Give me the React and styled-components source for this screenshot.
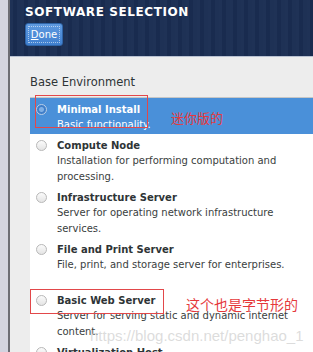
import React from 'react';
import styled, { createGlobalStyle } from 'styled-components';

const GlobalStyle = createGlobalStyle`
  html, body {
    margin: 0;
    padding: 0;
    background: #ededed;
    overflow: hidden;
  }
`;

const Page = styled.div`
  display: flex;
  width: 313px;
  height: 352px;
  font-family: "DejaVu Sans", sans-serif;
  position: relative;
  overflow: hidden;
`;

const SideStrip = styled.div`
  width: 8px;
  flex-shrink: 0;
  background: #d3d3df;
  border-right: 2px solid #6c6c74;
`;

const Main = styled.div`
  flex: 1;
  display: flex;
  flex-direction: column;
  min-width: 0;
`;

const Header = styled.div`
  height: 57px;
  flex-shrink: 0;
  box-sizing: border-box;
  padding: 5px 0 0 15px;
  border-bottom: 1px solid #b9c2d2;
  background:
    repeating-linear-gradient(90deg, rgba(255,255,255,0.025) 0 3px, rgba(0,0,0,0.04) 3px 7px, rgba(255,255,255,0.02) 7px 11px),
    #1a2d52;
`;

const Title = styled.div`
  color: #ffffff;
  font-family: "DejaVu Sans", sans-serif;
  font-weight: bold;
  font-size: 12px;
  letter-spacing: 0.6px;
  line-height: 15px;
`;

const DoneButton = styled.button`
  display: block;
  margin-top: 3px;
  width: 38px;
  height: 23px;
  padding: 2px;
  border: 1px solid #2f65a8;
  border-radius: 3px;
  background: linear-gradient(#5f9ae0, #3f7fcf);
  font-family: "DejaVu Sans", sans-serif;
  font-size: 10px;
  color: #ffffff;
  span {
    display: block;
    height: 100%;
    box-sizing: border-box;
    border: 1px dotted rgba(255,255,255,0.55);
    line-height: 15px;
  }
  u {
    text-decoration: underline;
  }
`;

const Body = styled.div`
  flex: 1;
  padding: 0 0 0 20px;
  background: #ededed;
`;

const SectionLabel = styled.div`
  color: #2e3436;
  font-size: 11.5px;
  line-height: 16px;
  margin: 17px 0 7px;
`;

const List = styled.div`
  background: #ffffff;
  border-top: 1px solid #c6c6c6;
  display: flex;
  flex-direction: column;
`;

const Row = styled.div`
  display: flex;
  gap: 10px;
  padding: 5px 0 1px 6px;
  margin-top: ${p => p.$gap || 0}px;
  background: ${p => p.$selected ? '#4a90d9' : '#ffffff'};
  color: ${p => p.$selected ? '#ffffff' : '#2e3436'};
`;

const Radio = styled.div`
  width: 11px;
  height: 11px;
  margin-top: 1px;
  flex-shrink: 0;
  border-radius: 50%;
  box-sizing: border-box;
  border: 1px solid ${p => p.$checked ? '#b9cde6' : '#b8b8b8'};
  background: ${p => p.$checked
    ? 'radial-gradient(circle, #7fb0e6 0 2px, #3f7ec9 3px)'
    : 'linear-gradient(#fbfbfb, #e4e4e4)'};
`;

const Texts = styled.div`
  display: flex;
  flex-direction: column;
`;

const Name = styled.div`
  font-weight: bold;
  font-size: 10px;
  line-height: 14px;
`;

const Desc = styled.div`
  font-size: 10px;
  line-height: 16px;
  color: ${p => p.$selected ? '#ffffff' : '#3a3e40'};
`;

const NoteBox = styled.div`
  position: absolute;
  left: ${p => p.$left}px;
  top: ${p => p.$top}px;
  width: ${p => p.$w}px;
  height: ${p => p.$h}px;
  border: 1px solid #e2484a;
  box-sizing: border-box;
  pointer-events: none;
`;

const NoteText = styled.div`
  position: absolute;
  left: ${p => p.$left}px;
  top: ${p => p.$top}px;
  color: #e5393b;
  font-family: "Noto Sans CJK SC", sans-serif;
  font-size: ${p => p.$size}px;
  white-space: nowrap;
`;

const Watermark = styled.div`
  position: absolute;
  left: 90px;
  top: 327px;
  color: rgba(205, 205, 205, 0.7);
  font-family: "Liberation Sans", sans-serif;
  font-size: 15px;
  white-space: nowrap;
  pointer-events: none;
`;

const environments = [
  { name: 'Minimal Install', desc: ['Basic functionality.'], selected: true },
  { name: 'Compute Node', desc: ['Installation for performing computation and', 'processing.'] },
  { name: 'Infrastructure Server', desc: ['Server for operating network infrastructure', 'services.'] },
  { name: 'File and Print Server', desc: ['File, print, and storage server for enterprises.'] },
  { name: 'Basic Web Server', desc: ['Server for serving static and dynamic internet', 'content.'], gap: 15 },
  { name: 'Virtualization Host', desc: ['Minimal virtualization host.'] },
];

export default function App() {
  return (
    <>
      <GlobalStyle />
      <Page>
        <SideStrip />
        <Main>
          <Header>
            <Title>SOFTWARE SELECTION</Title>
            <DoneButton><span><u>D</u>one</span></DoneButton>
          </Header>
          <Body>
            <SectionLabel>Base Environment</SectionLabel>
            <List>
              {environments.map((env) => (
                <Row key={env.name} $selected={env.selected} $gap={env.gap}>
                  <Radio $checked={env.selected} />
                  <Texts>
                    <Name>{env.name}</Name>
                    {env.desc.map((line) => (
                      <Desc key={line} $selected={env.selected}>{line}</Desc>
                    ))}
                  </Texts>
                </Row>
              ))}
            </List>
          </Body>
        </Main>
        <NoteBox $left={35} $top={95} $w={113} $h={33} />
        <NoteText $left={171} $top={108} $size={13}>迷你版的</NoteText>
        <NoteBox $left={30} $top={289} $w={134} $h={25} />
        <NoteText $left={186} $top={294} $size={14}>这个也是字节形的</NoteText>
        <Watermark>https://blog.csdn.net/penghao_1</Watermark>
      </Page>
    </>
  );
}
